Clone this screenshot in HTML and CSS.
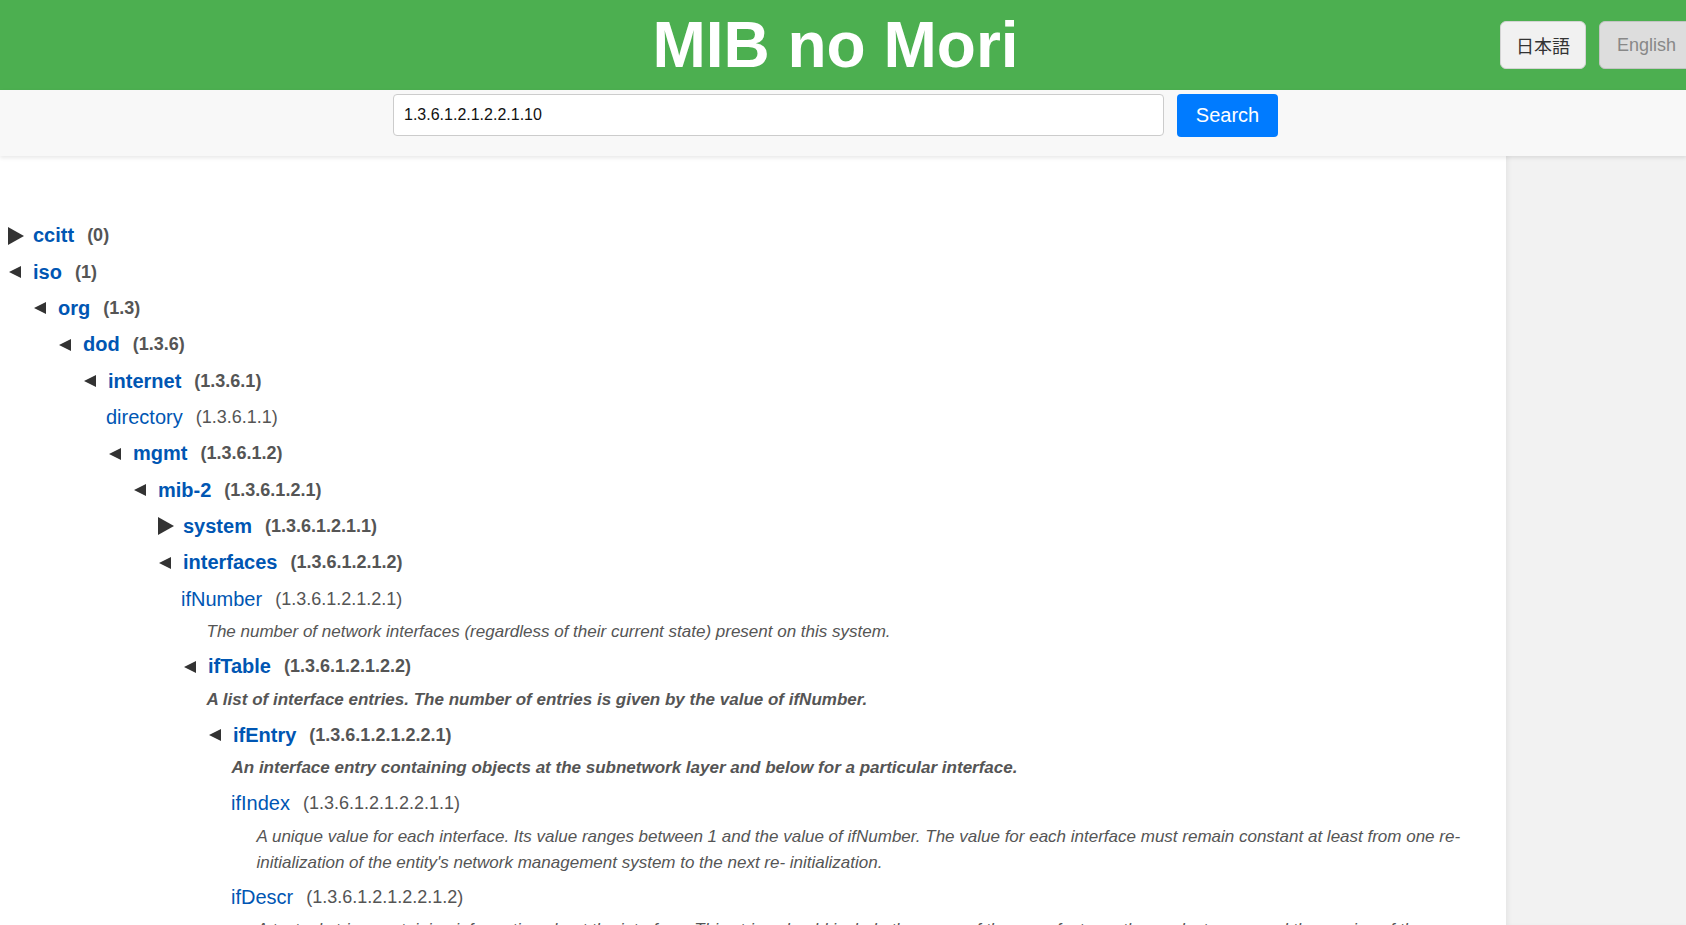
FILE: index.html
```html
<!DOCTYPE html>
<html lang="ja">
<head>
<meta charset="utf-8">
<title>MIB no Mori</title>
<link rel="stylesheet" href="styles.css">
</head>
<body>
<header class="site-header">
  <h1 class="site-title">MIB no Mori</h1>
  <div class="lang-switch">
    <button class="lang-btn lang-ja" type="button">日本語</button>
    <button class="lang-btn lang-en" type="button">English</button>
  </div>
</header>
<div class="search-bar">
  <form class="search-form">
    <input class="search-input" type="text" value="1.3.6.1.2.1.2.2.1.10">
    <button class="search-btn" type="button">Search</button>
  </form>
</div>
<div class="layout">
  <main class="content">
    <ul class="tree tree-root">
      <li class="node">
        <div class="line"><span class="tog"><svg class="tri-closed" viewBox="0 0 16 18"><polygon points="0,0 16,9 0,18"/></svg></span><a class="name">ccitt</a><span class="oid">(0)</span></div>
      </li>
      <li class="node">
        <div class="line"><span class="tog"><svg class="tri-open" viewBox="0 0 12 12"><polygon points="12,0 12,12 0,6"/></svg></span><a class="name">iso</a><span class="oid">(1)</span></div>
        <ul class="tree">
          <li class="node">
            <div class="line"><span class="tog"><svg class="tri-open" viewBox="0 0 12 12"><polygon points="12,0 12,12 0,6"/></svg></span><a class="name">org</a><span class="oid">(1.3)</span></div>
            <ul class="tree">
              <li class="node">
                <div class="line"><span class="tog"><svg class="tri-open" viewBox="0 0 12 12"><polygon points="12,0 12,12 0,6"/></svg></span><a class="name">dod</a><span class="oid">(1.3.6)</span></div>
                <ul class="tree">
                  <li class="node">
                    <div class="line"><span class="tog"><svg class="tri-open" viewBox="0 0 12 12"><polygon points="12,0 12,12 0,6"/></svg></span><a class="name">internet</a><span class="oid">(1.3.6.1)</span></div>
                    <ul class="tree">
                      <li class="leaf">
                        <div class="line"><a class="name">directory</a><span class="oid">(1.3.6.1.1)</span></div>
                      </li>
                      <li class="node">
                        <div class="line"><span class="tog"><svg class="tri-open" viewBox="0 0 12 12"><polygon points="12,0 12,12 0,6"/></svg></span><a class="name">mgmt</a><span class="oid">(1.3.6.1.2)</span></div>
                        <ul class="tree">
                          <li class="node">
                            <div class="line"><span class="tog"><svg class="tri-open" viewBox="0 0 12 12"><polygon points="12,0 12,12 0,6"/></svg></span><a class="name">mib-2</a><span class="oid">(1.3.6.1.2.1)</span></div>
                            <ul class="tree">
                              <li class="node">
                                <div class="line"><span class="tog"><svg class="tri-closed" viewBox="0 0 16 18"><polygon points="0,0 16,9 0,18"/></svg></span><a class="name">system</a><span class="oid">(1.3.6.1.2.1.1)</span></div>
                              </li>
                              <li class="node">
                                <div class="line"><span class="tog"><svg class="tri-open" viewBox="0 0 12 12"><polygon points="12,0 12,12 0,6"/></svg></span><a class="name">interfaces</a><span class="oid">(1.3.6.1.2.1.2)</span></div>
                                <ul class="tree">
                                  <li class="leaf">
                                    <div class="line"><a class="name">ifNumber</a><span class="oid">(1.3.6.1.2.1.2.1)</span></div>
                                    <p class="desc">The number of network interfaces (regardless of their current state) present on this system.</p>
                                  </li>
                                  <li class="node">
                                    <div class="line"><span class="tog"><svg class="tri-open" viewBox="0 0 12 12"><polygon points="12,0 12,12 0,6"/></svg></span><a class="name">ifTable</a><span class="oid">(1.3.6.1.2.1.2.2)</span></div>
                                    <p class="desc desc-strong">A list of interface entries. The number of entries is given by the value of ifNumber.</p>
                                    <ul class="tree">
                                      <li class="node">
                                        <div class="line"><span class="tog"><svg class="tri-open" viewBox="0 0 12 12"><polygon points="12,0 12,12 0,6"/></svg></span><a class="name">ifEntry</a><span class="oid">(1.3.6.1.2.1.2.2.1)</span></div>
                                        <p class="desc desc-strong">An interface entry containing objects at the subnetwork layer and below for a particular interface.</p>
                                        <ul class="tree">
                                          <li class="leaf">
                                            <div class="line"><a class="name">ifIndex</a><span class="oid">(1.3.6.1.2.1.2.2.1.1)</span></div>
                                            <p class="desc">A unique value for each interface. Its value ranges between 1 and the value of ifNumber. The value for each interface must remain constant at least from one re- initialization of the entity's network management system to the next re- initialization.</p>
                                          </li>
                                          <li class="leaf">
                                            <div class="line"><a class="name">ifDescr</a><span class="oid">(1.3.6.1.2.1.2.2.1.2)</span></div>
                                            <p class="desc">A textual string containing information about the interface. This string should include the name of the manufacturer, the product name and the version of the interface hardware/software.</p>
                                          </li>
                                        </ul>
                                      </li>
                                    </ul>
                                  </li>
                                </ul>
                              </li>
                            </ul>
                          </li>
                        </ul>
                      </li>
                    </ul>
                  </li>
                </ul>
              </li>
            </ul>
          </li>
        </ul>
      </li>
    </ul>
  </main>
  <aside class="sidebar"></aside>
</div>
</body>
</html>
```
FILE: styles.css
```css
html, body {
  margin: 0;
  padding: 0;
  overflow: hidden;
  height: 100%;
}
body {
  font-family: "Liberation Sans", Arial, "Noto Sans CJK JP", sans-serif;
  background: #ffffff;
  color: #333;
}

/* header */
.site-header {
  position: relative;
  background: #4caf50;
  height: 90px;
  padding-right: 15px;
}
.site-title {
  margin: 0;
  font-size: 64px;
  font-weight: bold;
  line-height: 90px;
  color: #ffffff;
  text-align: center;
}
.lang-switch {
  position: absolute;
  top: 21px;
  right: -8px;
  display: flex;
  gap: 13px;
}
.lang-btn {
  height: 48px;
  padding: 0 17px;
  font-family: "Liberation Sans", Arial, "Noto Sans CJK JP", sans-serif;
  font-size: 18px;
  border-radius: 6px;
  cursor: pointer;
}
.lang-ja {
  background: #f1f1f1;
  border: 1px solid #d4d4d4;
  color: #333;
  font-family: "Noto Sans CJK JP", sans-serif;
  font-size: 18px;
  padding: 0 15px;
}
.lang-en {
  background: #dddddd;
  border: 1px solid #c4c4c4;
  color: #888;
}

/* search bar */
.search-bar {
  position: relative;
  z-index: 2;
  background: #f8f8f8;
  height: 66px;
  box-sizing: border-box;
  padding: 4px 15px 0 0;
  box-shadow: 0 2px 4px rgba(0, 0, 0, 0.09);
}
.search-form {
  display: flex;
  justify-content: center;
  gap: 13px;
  margin: 0;
}
.search-input {
  box-sizing: border-box;
  width: 771px;
  height: 42px;
  border: 1px solid #cccccc;
  border-radius: 4px;
  padding: 0 10px;
  font-family: "Liberation Sans", Arial, sans-serif;
  font-size: 16px;
  color: #111;
  background: #fff;
}
.search-btn {
  box-sizing: border-box;
  width: 101px;
  height: 43px;
  border: none;
  border-radius: 4px;
  background: #007bff;
  color: #ffffff;
  font-family: "Liberation Sans", Arial, sans-serif;
  font-size: 20px;
  cursor: pointer;
}

/* layout */
.layout {
  display: grid;
  grid-template-columns: 1fr 180px;
  height: calc(100% - 156px);
}
.content {
  padding: 61.5px 30px 0 8px;
  overflow: hidden;
}
.sidebar {
  background: #f2f2f2;
  box-shadow: inset 4px 0 5px -2px rgba(0, 0, 0, 0.06);
}

/* tree */
.tree {
  list-style: none;
  margin: 0;
  padding: 0 0 0 25px;
}
.tree-root {
  padding-left: 0;
}
.line {
  display: flex;
  align-items: center;
  height: 36.35px;
  white-space: nowrap;
}
.tog {
  display: inline-flex;
  align-items: center;
  width: 25px;
  flex: none;
}
.tri-closed {
  width: 16px;
  height: 18px;
  fill: #333;
}
.tri-open {
  width: 12px;
  height: 12px;
  margin-left: 1px;
  fill: #333;
}
.name {
  font-size: 20px;
  font-weight: bold;
  color: #0056b3;
  text-decoration: none;
  cursor: pointer;
}
.oid {
  margin-left: 13px;
  font-size: 18px;
  font-weight: bold;
  color: #555;
}
.leaf > .line {
  margin-left: -2px;
}
.leaf .name {
  font-weight: normal;
}
.leaf .oid {
  font-weight: normal;
}
.desc {
  margin: 2px 0 3.3px 23.5px;
  font-size: 17px;
  line-height: 25.8px;
  font-style: italic;
  color: #555;
}
.desc-strong {
  font-weight: bold;
  margin-bottom: 4.5px;
}
```
